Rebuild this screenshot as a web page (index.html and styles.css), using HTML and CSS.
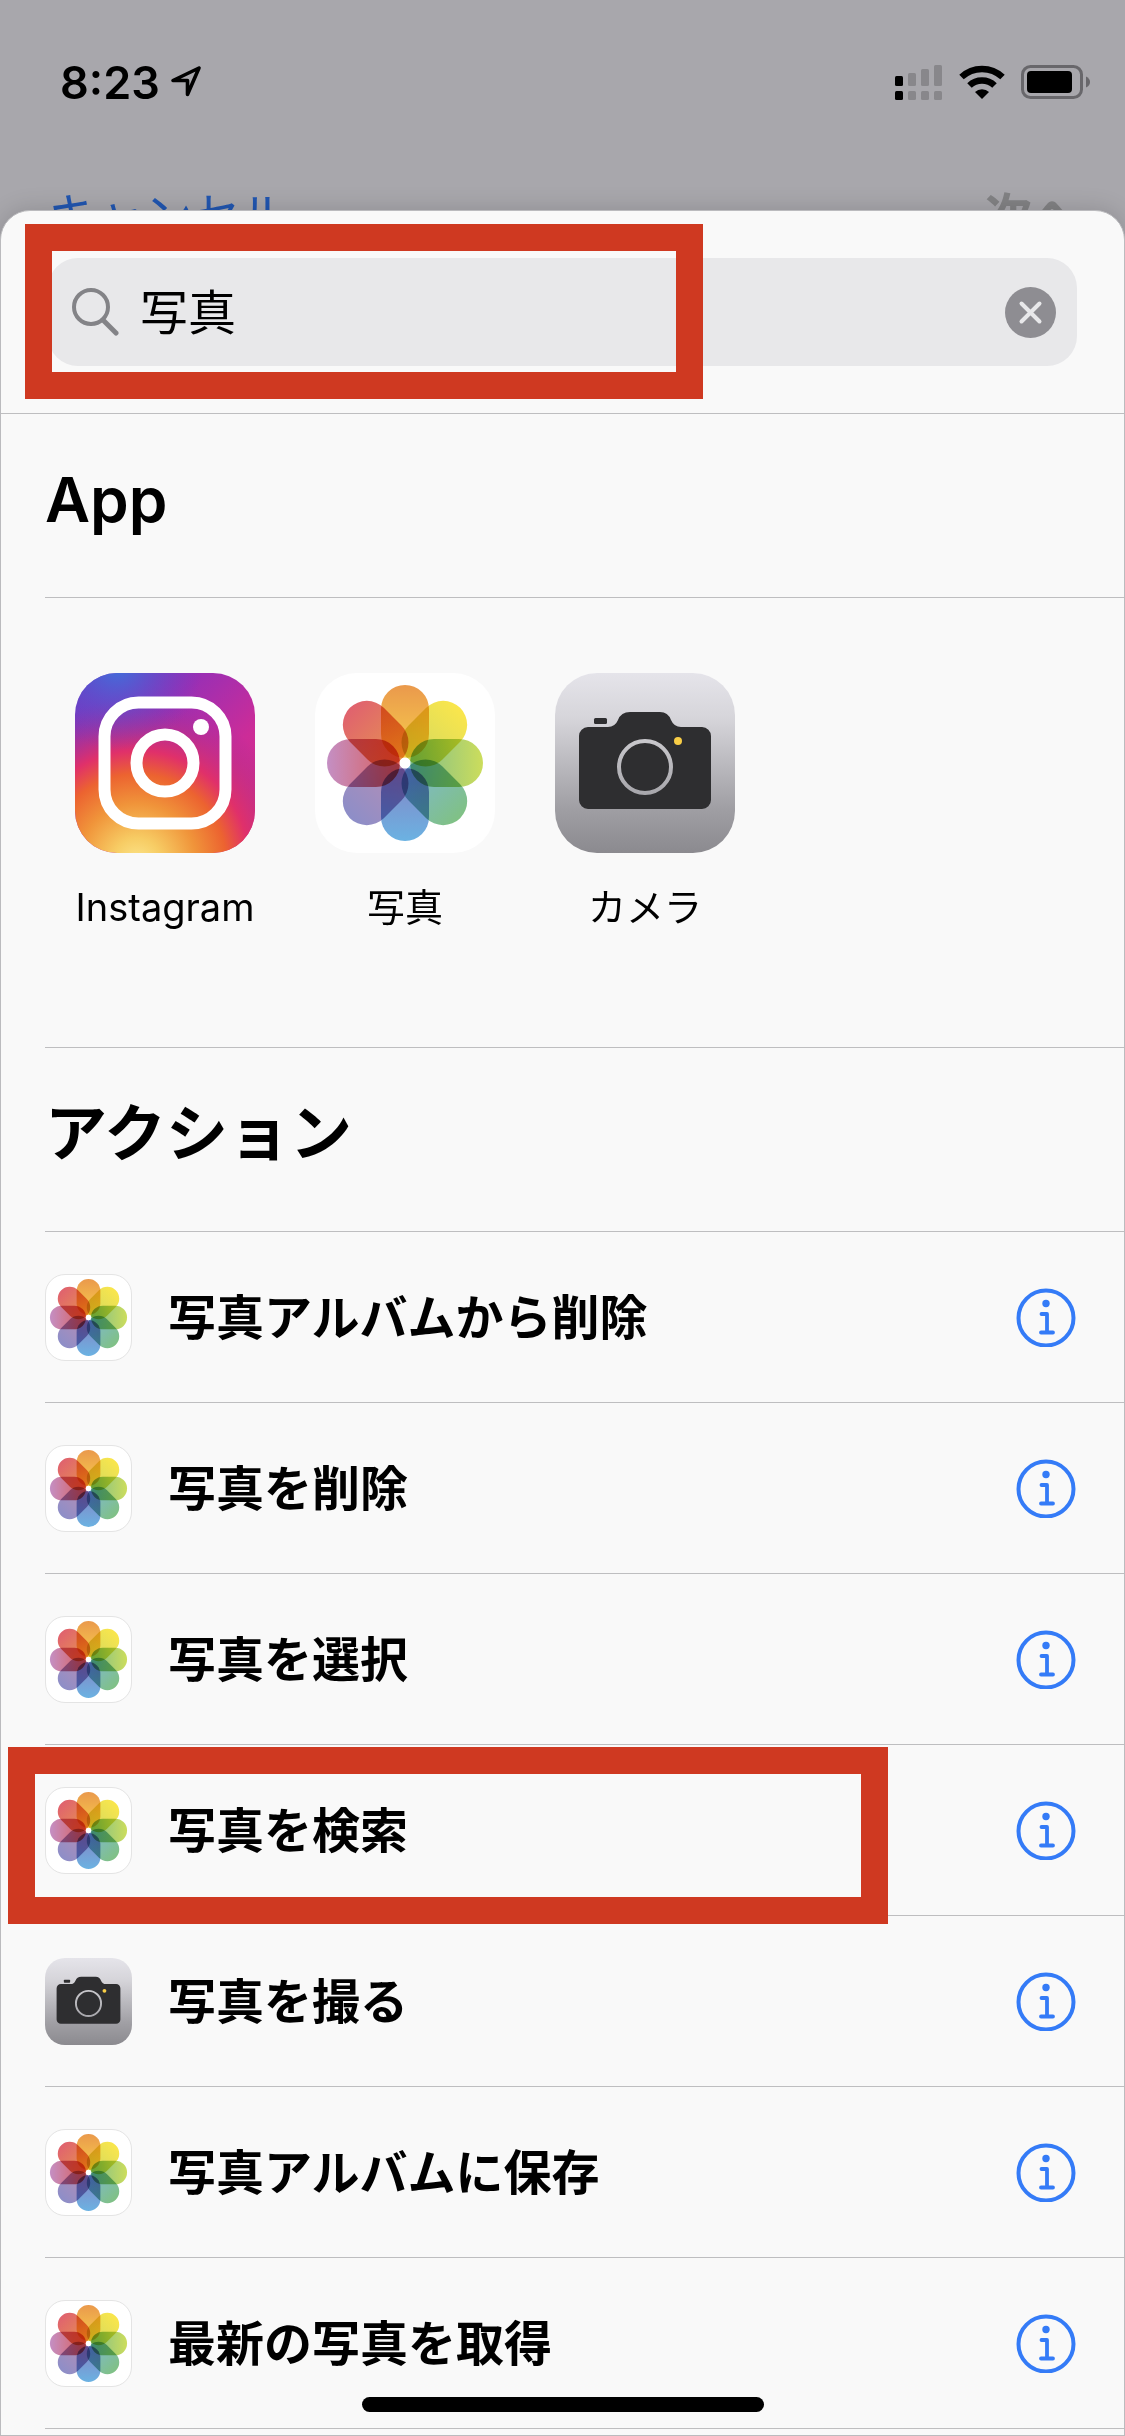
FILE: index.html
```html
<!DOCTYPE html>
<html lang="ja">
<head>
    <meta charset="UTF-8">
    <meta name="viewport" content="width=device-width, initial-scale=1.0">
    <title>アクションを追加</title>
    <link rel="stylesheet" href="styles.css">
</head>
<body>

    <!-- Shared icons -->
    <svg class="sprite" aria-hidden="true">
        <defs>
            <linearGradient id="p1" x1="0" y1="0" x2="0" y2="1"><stop offset="0" stop-color="#ea994c"/><stop offset="1" stop-color="#f8d04c"/></linearGradient>
            <linearGradient id="p2" x1="0" y1="0" x2="0" y2="1"><stop offset="0" stop-color="#fae64c"/><stop offset="1" stop-color="#d0d860"/></linearGradient>
            <linearGradient id="p3" x1="0" y1="0" x2="0" y2="1"><stop offset="0" stop-color="#ccdd5c"/><stop offset="1" stop-color="#7cbc8c"/></linearGradient>
            <linearGradient id="p4" x1="0" y1="0" x2="0" y2="1"><stop offset="0" stop-color="#80c184"/><stop offset="1" stop-color="#7eb8d4"/></linearGradient>
            <linearGradient id="p5" x1="0" y1="0" x2="0" y2="1"><stop offset="0" stop-color="#6bb2e2"/><stop offset="1" stop-color="#8682c4"/></linearGradient>
            <linearGradient id="p6" x1="0" y1="0" x2="0" y2="1"><stop offset="0" stop-color="#8d8ec8"/><stop offset="1" stop-color="#b88eb4"/></linearGradient>
            <linearGradient id="p7" x1="0" y1="0" x2="0" y2="1"><stop offset="0" stop-color="#c48fc4"/><stop offset="1" stop-color="#dc5c54"/></linearGradient>
            <linearGradient id="p8" x1="0" y1="0" x2="0" y2="1"><stop offset="0" stop-color="#e0626e"/><stop offset="1" stop-color="#e69450"/></linearGradient>
            <linearGradient id="cameraBg" x1="0" y1="0" x2="0" y2="1"><stop offset="0" stop-color="#e5e4ea"/><stop offset="0.25" stop-color="#d6d5da"/><stop offset="0.75" stop-color="#a09fa4"/><stop offset="1" stop-color="#8b8a8f"/></linearGradient>
            <linearGradient id="lens" x1="0" y1="0" x2="0" y2="1"><stop offset="0" stop-color="#c8c7cb"/><stop offset="1" stop-color="#a8a7ac"/></linearGradient>
            <linearGradient id="instaBase" x1="0" y1="0" x2="1" y2="1"><stop offset="0" stop-color="#6440c8"/><stop offset="0.35" stop-color="#9a2fb4"/><stop offset="0.65" stop-color="#cc2c98"/><stop offset="1" stop-color="#d63080"/></linearGradient>
            <radialGradient id="instaWarm" gradientUnits="userSpaceOnUse" cx="62" cy="190" r="165"><stop offset="0" stop-color="#fce68c"/><stop offset="0.15" stop-color="#f7cc64"/><stop offset="0.36" stop-color="#f0943a"/><stop offset="0.54" stop-color="#ec6330"/><stop offset="0.68" stop-color="#e0306a"/><stop offset="1" stop-color="#a02c98" stop-opacity="0"/></radialGradient>
            <radialGradient id="instaBlue" gradientUnits="userSpaceOnUse" cx="42" cy="-8" r="85"><stop offset="0" stop-color="#3f72dc"/><stop offset="1" stop-color="#6440c8" stop-opacity="0"/></radialGradient>
        </defs>

        <symbol id="photos" viewBox="0 0 180 180">
            <g class="petals">
                <rect x="66" y="12" width="48" height="73" rx="24" fill="url(#p1)"/>
                <rect x="66" y="12" width="48" height="73" rx="24" fill="url(#p2)" transform="rotate(45 90 90)"/>
                <rect x="66" y="12" width="48" height="73" rx="24" fill="url(#p3)" transform="rotate(90 90 90)"/>
                <rect x="66" y="12" width="48" height="73" rx="24" fill="url(#p4)" transform="rotate(135 90 90)"/>
                <rect x="66" y="12" width="48" height="73" rx="24" fill="url(#p5)" transform="rotate(180 90 90)"/>
                <rect x="66" y="12" width="48" height="73" rx="24" fill="url(#p6)" transform="rotate(225 90 90)"/>
                <rect x="66" y="12" width="48" height="73" rx="24" fill="url(#p7)" transform="rotate(270 90 90)"/>
                <rect x="66" y="12" width="48" height="73" rx="24" fill="url(#p8)" transform="rotate(315 90 90)"/>
            </g>
            <circle cx="90" cy="90" r="5.5" fill="#fff"/>
        </symbol>

        <symbol id="camera" viewBox="0 0 180 180">
            <rect width="180" height="180" fill="url(#cameraBg)"/>
            <rect x="39" y="45" width="13" height="6" rx="1.5" fill="#2e2e30"/>
            <path d="M33 54H53Q60 54 63 47Q66 39 75 39H105Q113 39 116 47Q119 54 126 54H147A9 9 0 0 1 156 63V127A9 9 0 0 1 147 136H33A9 9 0 0 1 24 127V63A9 9 0 0 1 33 54Z" fill="#2e2e30"/>
            <circle cx="90" cy="94" r="26" fill="none" stroke="url(#lens)" stroke-width="4"/>
            <circle cx="123" cy="68" r="4" fill="#f8cd46"/>
        </symbol>

        <symbol id="instagram" viewBox="0 0 180 180">
            <rect width="180" height="180" fill="url(#instaBase)"/>
            <rect width="180" height="180" fill="url(#instaWarm)"/>
            <rect width="180" height="180" fill="url(#instaBlue)"/>
            <rect x="29.5" y="29.5" width="121" height="121" rx="34" fill="none" stroke="#fff" stroke-width="12"/>
            <circle cx="90" cy="90" r="28.5" fill="none" stroke="#fff" stroke-width="12"/>
            <circle cx="126" cy="54" r="8" fill="#fff"/>
        </symbol>

        <symbol id="info" viewBox="0 0 60 60">
            <circle cx="30" cy="31" r="27.5" fill="none" stroke="#347bf7" stroke-width="4"/>
            <circle cx="30" cy="16.5" r="3.7" fill="#347bf7"/>
            <path d="M25.5 27H31V45.500M25 45.5H37" fill="none" stroke="#347bf7" stroke-width="3.8" stroke-linecap="round" stroke-linejoin="round"/>
        </symbol>
    </svg>

    <div class="status-bar">
        <div class="status-left">
            <span>8:23</span>
            <svg width="32" height="32" viewBox="0 0 32 32" aria-hidden="true">
                <path d="M29 2L3 14.500H17.500V28.500Z" fill="none" stroke="#000" stroke-width="3.6" stroke-linejoin="round"/>
            </svg>
        </div>
        <div class="status-right">
            <svg width="48" height="36" viewBox="0 0 48 36" aria-hidden="true">
                <g fill="#000">
                    <rect x="0" y="12" width="8" height="10" rx="1.5"/>
                    <rect x="0" y="27" width="8" height="9" rx="1.5"/>
                </g>
                <g fill="#88878b">
                    <rect x="13" y="9" width="8" height="13" rx="1.5"/>
                    <rect x="26" y="5" width="8" height="17" rx="1.5"/>
                    <rect x="39" y="1" width="8" height="21" rx="1.5"/>
                    <rect x="13" y="27" width="8" height="9" rx="1.5"/>
                    <rect x="26" y="27" width="8" height="9" rx="1.5"/>
                    <rect x="39" y="27" width="8" height="9" rx="1.5"/>
                </g>
            </svg>
            <svg width="46" height="34" viewBox="0 0 46 34" aria-hidden="true">
                <path d="M2.5 12A30 30 0 0 1 43.5 12M10.5 20.5A18 18 0 0 1 35.5 20.5" fill="none" stroke="#000" stroke-width="6.5"/>
                <path d="M23 34L16 27A10 10 0 0 1 30 27Z" fill="#000"/>
            </svg>
            <svg width="70" height="34" viewBox="0 0 70 34" aria-hidden="true">
                <rect x="1.5" y="1.5" width="59" height="31" rx="8" fill="none" stroke="#68676b" stroke-width="3"/>
                <rect x="6" y="6" width="45" height="22" rx="4" fill="#000"/>
                <path d="M65 11.5Q69 13.5 69 17T65 22.5Z" fill="#68676b"/>
            </svg>
        </div>
    </div>

    <div class="nav-bar">
        <a class="cancel" href="#">キャンセル</a>
        <span class="next">次へ</span>
    </div>

    <main class="sheet">
        <form class="search">
            <label class="search-box">
                <svg width="48" height="48" viewBox="0 0 48 48" aria-hidden="true">
                    <circle cx="19" cy="19" r="17" fill="none" stroke="#838387" stroke-width="4"/>
                    <path d="M31 32L44 45" stroke="#838387" stroke-width="5" stroke-linecap="round"/>
                </svg>
                <input type="text" value="写真" aria-label="検索">
                <button type="reset" class="clear" aria-label="消去">
                    <svg width="51" height="51" viewBox="0 0 51 51" aria-hidden="true">
                        <circle cx="25.5" cy="25.5" r="25.5" fill="#8e8d92"/>
                        <path d="M16.5 16.5L34.5 34.5M34.5 16.5L16.5 34.5" stroke="#e8e8ea" stroke-width="4" stroke-linecap="round"/>
                    </svg>
                </button>
            </label>
            <div class="mark mark-search"></div>
        </form>

        <section class="group">
            <h2>App</h2>
            <div class="apps">
                <button class="app">
                    <svg class="app-icon" aria-hidden="true"><use href="#instagram"/></svg>
                    <span>Instagram</span>
                </button>
                <button class="app">
                    <svg class="app-icon" aria-hidden="true"><use href="#photos"/></svg>
                    <span>写真</span>
                </button>
                <button class="app">
                    <svg class="app-icon" aria-hidden="true"><use href="#camera"/></svg>
                    <span>カメラ</span>
                </button>
            </div>
        </section>

        <section class="group">
            <h2>アクション</h2>
            <ul class="actions">
                <li>
                    <svg class="action-icon outlined" viewBox="4 4 172 172" aria-hidden="true"><use href="#photos" width="180" height="180"/></svg>
                    <span>写真アルバムから削除</span>
                    <button class="info" aria-label="情報"><svg aria-hidden="true"><use href="#info"/></svg></button>
                </li>
                <li>
                    <svg class="action-icon outlined" viewBox="4 4 172 172" aria-hidden="true"><use href="#photos" width="180" height="180"/></svg>
                    <span>写真を削除</span>
                    <button class="info" aria-label="情報"><svg aria-hidden="true"><use href="#info"/></svg></button>
                </li>
                <li>
                    <svg class="action-icon outlined" viewBox="4 4 172 172" aria-hidden="true"><use href="#photos" width="180" height="180"/></svg>
                    <span>写真を選択</span>
                    <button class="info" aria-label="情報"><svg aria-hidden="true"><use href="#info"/></svg></button>
                </li>
                <li>
                    <svg class="action-icon outlined" viewBox="4 4 172 172" aria-hidden="true"><use href="#photos" width="180" height="180"/></svg>
                    <span>写真を検索</span>
                    <button class="info" aria-label="情報"><svg aria-hidden="true"><use href="#info"/></svg></button>
                    <div class="mark mark-action"></div>
                </li>
                <li>
                    <svg class="action-icon" aria-hidden="true"><use href="#camera"/></svg>
                    <span>写真を撮る</span>
                    <button class="info" aria-label="情報"><svg aria-hidden="true"><use href="#info"/></svg></button>
                </li>
                <li>
                    <svg class="action-icon outlined" viewBox="4 4 172 172" aria-hidden="true"><use href="#photos" width="180" height="180"/></svg>
                    <span>写真アルバムに保存</span>
                    <button class="info" aria-label="情報"><svg aria-hidden="true"><use href="#info"/></svg></button>
                </li>
                <li>
                    <svg class="action-icon outlined" viewBox="4 4 172 172" aria-hidden="true"><use href="#photos" width="180" height="180"/></svg>
                    <span>最新の写真を取得</span>
                    <button class="info" aria-label="情報"><svg aria-hidden="true"><use href="#info"/></svg></button>
                </li>
            </ul>
        </section>

        <div class="home-indicator"></div>
    </main>

</body>
</html>
```
FILE: styles.css
```css
* {
    box-sizing: border-box;
}
body {
    display: flex;
    flex-direction: column;
    min-height: 100vh;
    margin: 0;
    background-color: #a8a7ac;
    color: #000;
    font-family: Inter, "Noto Sans CJK JP", sans-serif;
    font-size: 48px;
}
button {
    padding: 0;
    border: none;
    background: none;
    color: inherit;
    font: inherit;
    cursor: pointer;
}
svg {
    display: block;
    flex-shrink: 0;
}
.sprite {
    position: absolute;
    width: 0;
    height: 0;
}
.petals {
    isolation: isolate;
}
.petals rect {
    mix-blend-mode: multiply;
}

/* Status bar */
.status-bar {
    display: flex;
    justify-content: space-between;
    align-items: center;
    height: 164px;
    padding: 0 34px 0 60px;
}
.status-left {
    display: flex;
    align-items: center;
    gap: 10px;
    font-size: 45px;
    font-weight: 600;
}
.status-right {
    display: flex;
    align-items: center;
    gap: 16px;
}

/* Screen behind the sheet */
.nav-bar {
    display: flex;
    justify-content: space-between;
    height: 46px;
    padding: 20px 45px 0 48px;
    line-height: 64px;
}
.cancel {
    color: #2156b0;
    text-decoration: none;
}
.next {
    color: #828284;
    font-weight: 700;
}

/* Sheet */
.sheet {
    position: relative;
    flex: 1;
    border: 1px solid #bbbbbe;
    border-radius: 30px 30px 0 0;
    background-color: #f9f9f9;
    box-shadow: 0 0 24px rgba(0, 0, 0, 0.16);
}
.search {
    position: relative;
    padding: 47px;
    border-bottom: 1px solid #bebec0;
}
.search-box {
    display: flex;
    align-items: center;
    gap: 20px;
    height: 108px;
    padding: 0 21px 0 24px;
    border-radius: 30px;
    background-color: #e8e8ea;
}
.search-box input {
    flex: 1;
    min-width: 0;
    padding: 0 0 6px;
    border: none;
    outline: none;
    background: none;
    font: inherit;
}

.group {
    padding-left: 44px;
}
h2 {
    margin: 0;
    padding: 46px 0 57px;
    font-size: 62px;
    font-weight: 600;
    line-height: 80px;
}

/* Apps */
.apps {
    display: flex;
    gap: 60px;
    padding: 75px 30px 118px;
    border-top: 1px solid #bebec0;
    border-bottom: 1px solid #bebec0;
}
.app {
    display: flex;
    flex-direction: column;
    align-items: center;
    gap: 32px;
    width: 180px;
    font-size: 38px;
    line-height: 44px;
    white-space: nowrap;
}
.app-icon {
    width: 180px;
    height: 180px;
    border-radius: 42px;
    background-color: #fff;
}

/* Actions */
.actions {
    margin: 0;
    padding: 0;
    list-style: none;
    border-top: 1px solid #bebec0;
}
.actions li {
    position: relative;
    display: flex;
    align-items: center;
    gap: 36px;
    height: 171px;
    padding-right: 48px;
    border-bottom: 1px solid #bebec0;
    font-weight: 600;
}
.actions span {
    padding-bottom: 6px;
}
.action-icon {
    width: 87px;
    height: 87px;
    border-radius: 20px;
}
.outlined {
    border: 1px solid #e4e4e4;
    background-color: #fff;
}
.info {
    margin-left: auto;
}
.info svg {
    width: 60px;
    height: 60px;
}

/* Red highlight frames */
.mark {
    position: absolute;
    z-index: 1;
    border: 27px solid #cf3921;
    pointer-events: none;
}
.mark-search {
    top: 13px;
    left: 24px;
    width: 678px;
    height: 175px;
}
.mark-action {
    top: 2px;
    left: -37px;
    width: 880px;
    height: 177px;
}

.home-indicator {
    position: absolute;
    bottom: 23px;
    left: 50%;
    width: 402px;
    height: 15px;
    margin-left: -201px;
    border-radius: 8px;
    background-color: #000;
}
```
